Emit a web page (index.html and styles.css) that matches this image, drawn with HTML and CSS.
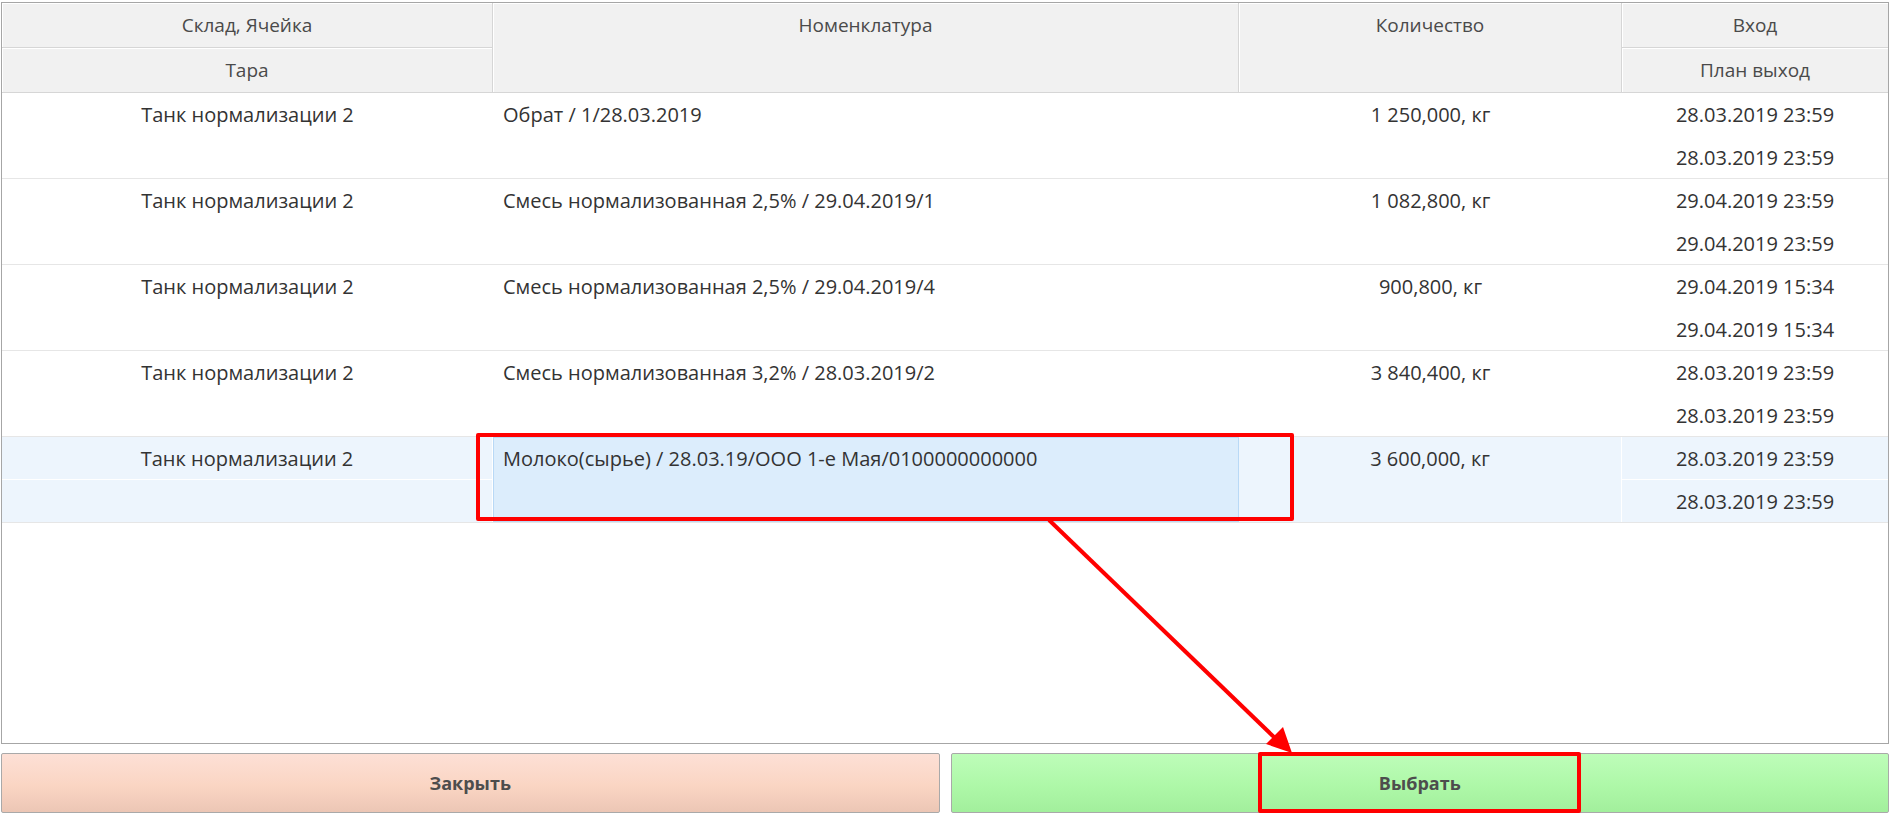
FILE: index.html
```html
<!DOCTYPE html>
<html lang="ru">
<head>
<meta charset="utf-8">
<title>Выбор</title>
<link rel="stylesheet" href="styles.css">
</head>
<body>
<div class="page">
  <div class="table">
    <div class="thead">
      <div class="th c1 r1">Склад, Ячейка</div>
      <div class="th c2 span top">Номенклатура</div>
      <div class="th c3 span top">Количество</div>
      <div class="th c4 r1">Вход</div>
      <div class="th c1 r2">Тара</div>
      <div class="th c4 r2">План выход</div>
    </div>
    <div class="tbody">
      <div class="row">
        <div class="td c1 r1">Танк нормализации 2</div>
        <div class="td c2 span left">Обрат / 1/28.03.2019</div>
        <div class="td c3 span">1 250,000, кг</div>
        <div class="td c4 r1">28.03.2019 23:59</div>
        <div class="td c1 r2"></div>
        <div class="td c4 r2">28.03.2019 23:59</div>
      </div>
      <div class="row">
        <div class="td c1 r1">Танк нормализации 2</div>
        <div class="td c2 span left">Смесь нормализованная 2,5% / 29.04.2019/1</div>
        <div class="td c3 span">1 082,800, кг</div>
        <div class="td c4 r1">29.04.2019 23:59</div>
        <div class="td c1 r2"></div>
        <div class="td c4 r2">29.04.2019 23:59</div>
      </div>
      <div class="row">
        <div class="td c1 r1">Танк нормализации 2</div>
        <div class="td c2 span left">Смесь нормализованная 2,5% / 29.04.2019/4</div>
        <div class="td c3 span">900,800, кг</div>
        <div class="td c4 r1">29.04.2019 15:34</div>
        <div class="td c1 r2"></div>
        <div class="td c4 r2">29.04.2019 15:34</div>
      </div>
      <div class="row">
        <div class="td c1 r1">Танк нормализации 2</div>
        <div class="td c2 span left">Смесь нормализованная 3,2% / 28.03.2019/2</div>
        <div class="td c3 span">3 840,400, кг</div>
        <div class="td c4 r1">28.03.2019 23:59</div>
        <div class="td c1 r2"></div>
        <div class="td c4 r2">28.03.2019 23:59</div>
      </div>
      <div class="row selected">
        <div class="td c1 r1">Танк нормализации 2</div>
        <div class="td c2 span left active">Молоко(сырье) / 28.03.19/ООО 1-е Мая/0100000000000</div>
        <div class="td c3 span">3 600,000, кг</div>
        <div class="td c4 r1">28.03.2019 23:59</div>
        <div class="td c1 r2"></div>
        <div class="td c4 r2">28.03.2019 23:59</div>
      </div>
    </div>
  </div>
  <div class="buttons">
    <button class="btn btn-close">Закрыть</button>
    <button class="btn btn-select">Выбрать</button>
  </div>

  <div class="mark mark-cell"></div>
  <div class="mark mark-btn"></div>
  <svg class="arrow" width="1902" height="821" viewBox="0 0 1902 821">
    <line x1="1049" y1="520" x2="1276" y2="739" stroke="#ff0000" stroke-width="4"/>
    <polygon points="1292,753 1266,744 1283,727" fill="#ff0000"/>
  </svg>
</div>
</body>
</html>
```

FILE: styles.css
```css
html, body {
  margin: 0;
  padding: 0;
  background: #ffffff;
}

body {
  font-family: "Open Sans", "Liberation Sans", sans-serif;
  color: #333333;
}

.page {
  position: relative;
  width: 1902px;
  height: 821px;
  overflow: hidden;
  padding: 2px 0 0 1px;
  box-sizing: border-box;
}

.table {
  width: 1888px;
  height: 742px;
  box-sizing: border-box;
  border: 1px solid #a6a6a6;
  display: flex;
  flex-direction: column;
  background: #ffffff;
}

.thead,
.row {
  display: grid;
  grid-template-columns: 491px 746px 383px 1fr;
}

.thead {
  grid-template-rows: 45px 45px;
  background: #f1f1f1;
}

.th {
  box-sizing: border-box;
  font-size: 19px;
  color: #4a4a4a;
  text-align: center;
  border-right: 1px solid #d6d6d6;
  border-bottom: 1px solid #d6d6d6;
  box-shadow: inset 1px 1px 0 #ffffff;
  display: flex;
  align-items: center;
  justify-content: center;
}

.th.c4 { border-right: none; }

.th.top {
  align-items: flex-start;
  padding-top: 9px;
}

.c1 { grid-column: 1; }
.c2 { grid-column: 2; }
.c3 { grid-column: 3; }
.c4 { grid-column: 4; }
.r1 { grid-row: 1; }
.r2 { grid-row: 2; }
.span { grid-row: 1 / span 2; }

.tbody {
  flex: 1;
}

.row {
  grid-template-rows: 43px 42px;
  border-bottom: 1px solid #e6e6e6;
}

.td {
  box-sizing: border-box;
  font-size: 20px;
  color: #333333;
  text-align: center;
  line-height: 40px;
  padding-top: 2px;
  white-space: nowrap;
}

.td.left {
  text-align: left;
  padding-left: 10px;
}

.row.selected {
  background: #edf5fd;
}

.row.selected .td {
  border-right: 1px solid #ffffff;
}

.row.selected .td.c4 { border-right: none; }

.row.selected .td.r1.c1,
.row.selected .td.r1.c4 {
  border-bottom: 1px solid #ffffff;
}

.row.selected .td.active {
  background: #dcedfc;
  border: 1px solid #b9d9f6;
  padding-left: 9px;
  padding-top: 1px;
  line-height: 40px;
}

.buttons {
  display: grid;
  grid-template-columns: 1fr 1fr;
  column-gap: 11px;
  width: 1888px;
  margin-top: 9px;
}

.btn {
  height: 60px;
  border: 1px solid #a9a9a9;
  border-radius: 2px;
  font-family: "Open Sans", "Liberation Sans", sans-serif;
  font-weight: 700;
  font-size: 18px;
  color: #4d4d4d;
  padding: 0;
}

.btn-close {
  background: linear-gradient(#fde0d6, #fad5c3 55%, #ecc6b5);
}

.btn-select {
  background: linear-gradient(#befdb9, #aef8a8 55%, #a2ef9c);
}

.mark {
  position: absolute;
  border: 4px solid #ff0000;
  border-radius: 2px;
  box-sizing: border-box;
}

.mark-cell {
  left: 476px;
  top: 433px;
  width: 818px;
  height: 88px;
}

.mark-btn {
  left: 1258px;
  top: 752px;
  width: 323px;
  height: 61px;
}

.arrow {
  position: absolute;
  left: 0;
  top: 0;
  pointer-events: none;
}
```
